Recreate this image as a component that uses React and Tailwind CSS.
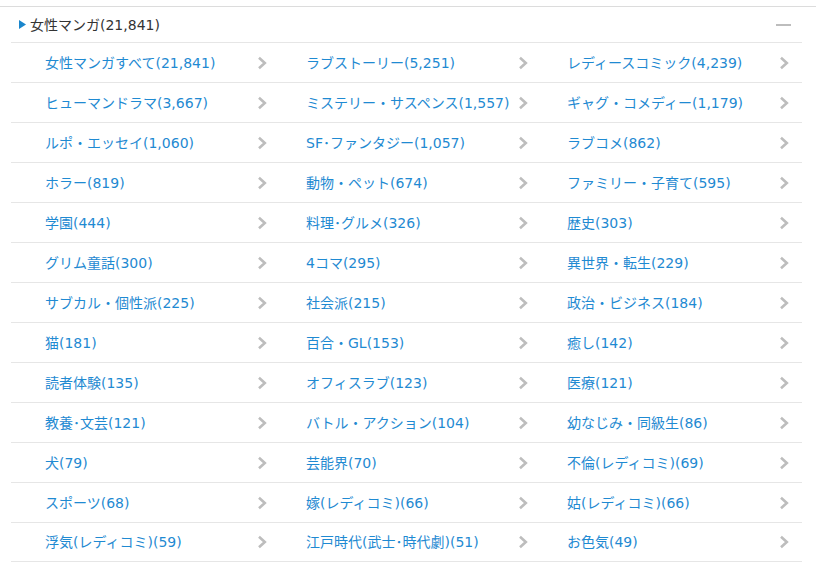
import React from "react";

const items = [
  "女性マンガすべて(21,841)", "ラブストーリー(5,251)", "レディースコミック(4,239)",
  "ヒューマンドラマ(3,667)", "ミステリー・サスペンス(1,557)", "ギャグ・コメディー(1,179)",
  "ルポ・エッセイ(1,060)", "SF･ファンタジー(1,057)", "ラブコメ(862)",
  "ホラー(819)", "動物・ペット(674)", "ファミリー・子育て(595)",
  "学園(444)", "料理･グルメ(326)", "歴史(303)",
  "グリム童話(300)", "4コマ(295)", "異世界・転生(229)",
  "サブカル・個性派(225)", "社会派(215)", "政治・ビジネス(184)",
  "猫(181)", "百合・GL(153)", "癒し(142)",
  "読者体験(135)", "オフィスラブ(123)", "医療(121)",
  "教養･文芸(121)", "バトル・アクション(104)", "幼なじみ・同級生(86)",
  "犬(79)", "芸能界(70)", "不倫(レディコミ)(69)",
  "スポーツ(68)", "嫁(レディコミ)(66)", "姑(レディコミ)(66)",
  "浮気(レディコミ)(59)", "江戸時代(武士･時代劇)(51)", "お色気(49)",
];

function Chevron() {
  return (
    <svg width="10" height="14" viewBox="0 0 10 14" className="block">
      <polyline points="2,1.8 7.8,7 2,12.2" fill="none" stroke="#bdbdbd" strokeWidth="2.6" />
    </svg>
  );
}

export default function App() {
  const rows = [];
  for (let i = 0; i < items.length; i += 3) rows.push(items.slice(i, i + 3));
  return (
    <div
      className="w-[816px] h-[564px] bg-white overflow-hidden pt-[6px]"
      style={{ fontFamily: '"DejaVu Sans", "Noto Sans CJK JP", sans-serif' }}
    >
      <div className="border-t border-[#dcdcdc]">
        <div className="h-[35px] flex items-center pl-[19px] pr-[25px]">
          <svg width="7" height="9" viewBox="0 0 7 9" className="mr-[4px]">
            <polygon points="0,0 7,4.5 0,9" fill="#1a86cc" />
          </svg>
          <span className="text-[14px] text-[#333] leading-none">女性マンガ(21,841)</span>
          <div className="ml-auto w-[15px] h-[2px] bg-[#bdbdbd]" />
        </div>
        <div className="ml-[11px] w-[791px]">
          {rows.map((r, ri) => (
            <div key={ri} className="flex h-[40px] border-t border-[#e6e6e6] last:border-b">
              {r.map((t, ci) => (
                <div key={ci} className="w-[261px] flex items-center pl-[34px] pr-[5px]">
                  <span className="text-[14px] text-[#1f8ad2] leading-none whitespace-nowrap">{t}</span>
                  <span className="ml-auto"><Chevron /></span>
                </div>
              ))}
            </div>
          ))}
        </div>
      </div>
    </div>
  );
}
